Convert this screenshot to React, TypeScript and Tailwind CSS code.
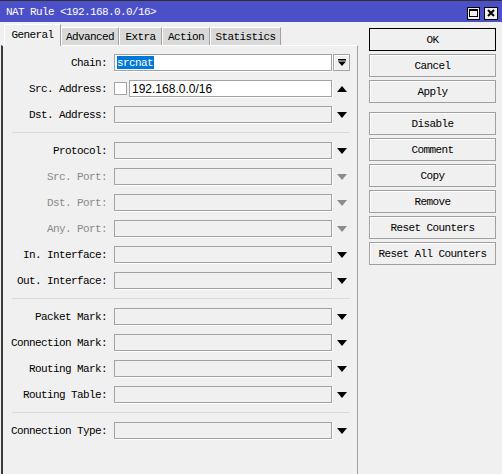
import React from 'react';

type Row = {
  label: string;
  kind?: 'chain' | 'src';
  disabled?: boolean;
  arrow?: 'down' | 'up';
};

const groups: Row[][] = [
  [
    { label: 'Chain:', kind: 'chain' },
    { label: 'Src. Address:', kind: 'src', arrow: 'up' },
    { label: 'Dst. Address:' },
  ],
  [
    { label: 'Protocol:' },
    { label: 'Src. Port:', disabled: true },
    { label: 'Dst. Port:', disabled: true },
    { label: 'Any. Port:', disabled: true },
    { label: 'In. Interface:' },
    { label: 'Out. Interface:' },
  ],
  [
    { label: 'Packet Mark:' },
    { label: 'Connection Mark:' },
    { label: 'Routing Mark:' },
    { label: 'Routing Table:' },
  ],
  [{ label: 'Connection Type:' }],
];

const tabs = [
  { name: 'General', w: 'w-[57px]', active: true },
  { name: 'Advanced', w: 'w-[58px]' },
  { name: 'Extra', w: 'w-[43px]' },
  { name: 'Action', w: 'w-[48px]' },
  { name: 'Statistics', w: 'w-[71px]' },
];

function Triangle({ up, gray }: { up?: boolean; gray?: boolean }) {
  return (
    <svg width="10" height="6" viewBox="0 0 10 6">
      <polygon
        points={up ? '0,6 10,6 5,0' : '0,0 10,0 5,6'}
        fill={gray ? '#8a8c88' : '#000'}
      />
    </svg>
  );
}

function FieldRow({ row }: { row: Row }) {
  const field = 'h-[17px] border border-[#a3a3a3] shadow-[1px_1px_0_#fff]';
  return (
    <div className="flex items-center h-[17px]">
      <div className={`w-[104px] pt-[2px] text-right whitespace-nowrap ${row.disabled ? 'text-[#8a8a8a]' : 'text-black'}`}>
        {row.label}
      </div>
      {row.kind === 'chain' && (
        <>
          <div className={`ml-[7px] w-[218px] bg-white flex items-center pl-[2px] ${field}`}>
            <span className="bg-[#0078d7] text-white leading-[12px] pt-[1px] pr-[1px]">srcnat</span>
          </div>
          <div className="ml-[1px] w-[17px] h-[17px] border border-[#a3a3a3] bg-[#f0f0f0] shadow-[inset_1px_1px_0_#fff] flex items-center justify-center">
            <svg width="8" height="7" viewBox="0 0 8 7">
              <rect x="0" y="0" width="8" height="1.5" fill="#000" />
              <polygon points="0,2.5 8,2.5 4,7" fill="#000" />
            </svg>
          </div>
        </>
      )}
      {row.kind === 'src' && (
        <>
          <div className="ml-[7px] w-[13px] h-[13px] border border-[#a3a3a3] bg-white" />
          <div className={`ml-[2px] w-[203px] bg-white flex items-center pl-[2px] pt-[1px] font-['Liberation_Sans'] text-[12px] tracking-normal ${field}`}>
            192.168.0.0/16
          </div>
          <div className="ml-[1px] w-[17px] flex justify-center">
            <Triangle up />
          </div>
        </>
      )}
      {!row.kind && (
        <>
          <div className={`ml-[7px] w-[218px] bg-[#f0f0f0] ${field}`} />
          <div className="ml-[1px] w-[17px] flex justify-center">
            <Triangle gray={row.disabled} />
          </div>
        </>
      )}
    </div>
  );
}

const buttons = [
  ['OK', 'Cancel', 'Apply'],
  ['Disable', 'Comment', 'Copy', 'Remove', 'Reset Counters', 'Reset All Counters'],
];

export default function App() {
  return (
    <div className="w-[502px] h-[474px] bg-[#f0f0f0] flex flex-col overflow-hidden font-['Liberation_Mono','DejaVu_Sans_Mono',monospace] text-[11px] tracking-[-0.6px] text-black">
      {/* title bar */}
      <div className="h-[22px] border-t border-[#303030] bg-[#4b50c8] flex items-center justify-between">
        <span className="pl-[6px] pt-[1px] text-white">NAT Rule &lt;192.168.0.0/16&gt;</span>
        <div className="flex items-center gap-[4px] mr-[4px] mt-[3px]">
          <div className="w-[13px] h-[13px] bg-[#f0f0f0] border border-black flex items-center justify-center">
            <div className="w-[9px] h-[8px] border border-black border-t-2" />
          </div>
          <div className="w-[14px] h-[13px] bg-[#f0f0f0] border border-black flex items-center justify-center">
            <svg width="8" height="8" viewBox="0 0 8 8">
              <path d="M1 1 L7 7 M7 1 L1 7" stroke="#000" strokeWidth="2" />
            </svg>
          </div>
        </div>
      </div>

      <div className="flex flex-1">
        {/* left: tabs + panel */}
        <div className="flex flex-col w-[358px]">
          <div className="flex items-end h-[23px] pl-[4px]">
            {tabs.map((t) =>
              t.active ? (
                <div
                  key={t.name}
                  className={`${t.w} h-[22px] -mb-px relative z-10 bg-[#f0f0f0] border-l border-t border-white border-r border-r-[#a0a0a0] flex items-center justify-center pb-[1px]`}
                >
                  {t.name}
                </div>
              ) : (
                <div
                  key={t.name}
                  className={`${t.w} h-[18px] bg-[#d9d9d9] border-l border-t border-white border-r border-r-[#a0a0a0] flex items-center justify-center pt-[1px]`}
                >
                  {t.name}
                </div>
              )
            )}
          </div>
          <div className="flex-1 ml-[1px] border-l-2 border-l-[#3a3a3a] border-t border-t-white border-r border-r-[#a0a0a0] pt-[8px] flex flex-col gap-[9px]">
            {groups.map((g, gi) => (
              <React.Fragment key={gi}>
                {gi > 0 && <div className="ml-[9px] w-[338px] h-px bg-[#dadada]" />}
                {g.map((r) => (
                  <FieldRow key={r.label} row={r} />
                ))}
              </React.Fragment>
            ))}
          </div>
        </div>

        {/* right: buttons */}
        <div className="ml-[11px] pt-[6px] flex flex-col">
          {buttons.map((grp, gi) => (
            <div key={gi} className={`flex flex-col gap-[3px] ${gi > 0 ? 'mt-[9px]' : ''}`}>
              {grp.map((b) => (
                <div
                  key={b}
                  className={`w-[127px] h-[23px] pt-[2px] flex items-center justify-center bg-[#f0f0f0] border ${
                    b === 'OK' ? 'border-black' : 'border-[#a0a0a0] shadow-[inset_1px_1px_0_#fff]'
                  }`}
                >
                  {b}
                </div>
              ))}
            </div>
          ))}
        </div>
      </div>
    </div>
  );
}
